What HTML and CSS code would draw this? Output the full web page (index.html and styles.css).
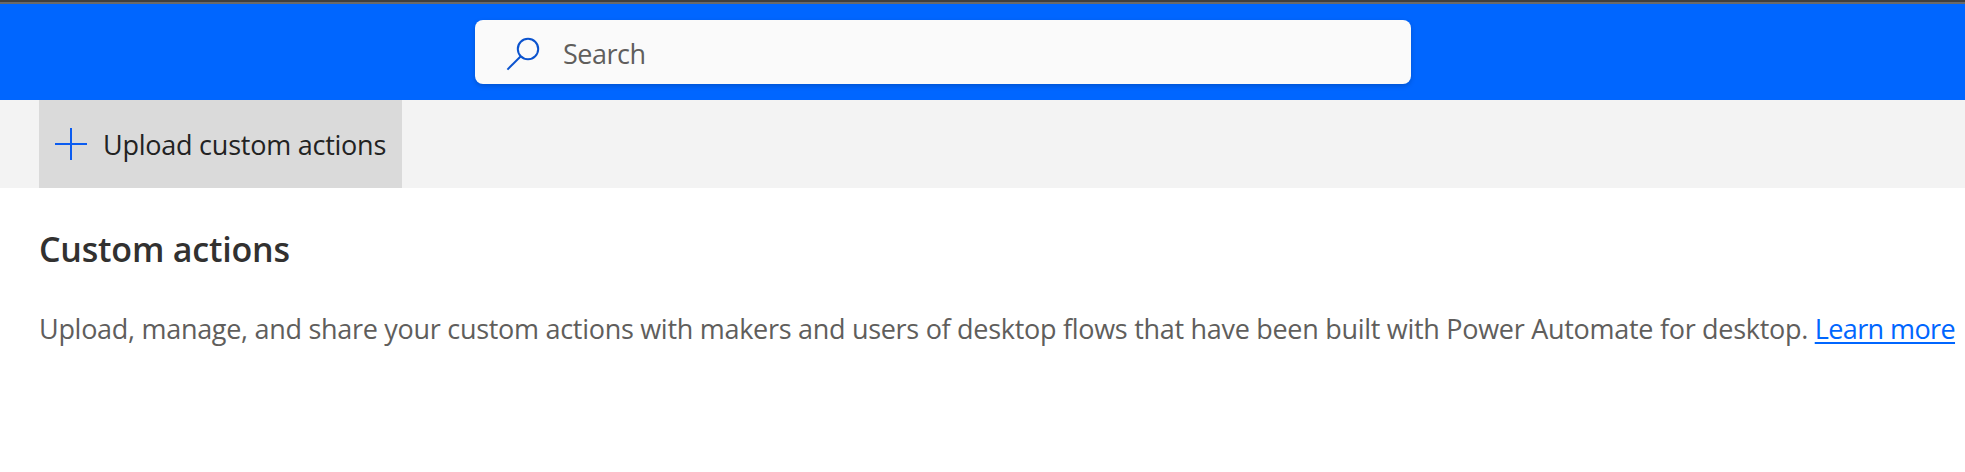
FILE: index.html
```html
<!DOCTYPE html>
<html lang="en">
<head>
<meta charset="utf-8">
<title>Custom actions</title>
<link rel="stylesheet" href="styles.css">
</head>
<body>
<div class="window-edge"></div>
<header class="topbar">
  <div class="search">
    <svg class="search-icon" width="34" height="34" viewBox="0 0 34 34"><circle cx="22" cy="12" r="10.2"/><path d="M14.8 19.2L1.4 32.6"/></svg>
    <span class="search-label">Search</span>
  </div>
</header>
<nav class="commands">
  <button class="upload">
    <svg class="plus" width="32" height="32" viewBox="0 0 32 32"><path d="M16 0V32M0 16H32"/></svg>
    <span class="upload-label">Upload custom actions</span>
  </button>
</nav>
<main class="content">
  <h1 class="title">Custom actions</h1>
  <p class="intro">Upload, manage, and share your custom actions with makers and users of desktop flows that have been built with Power Automate for desktop. <a class="link" href="#">Learn more</a></p>
</main>
</body>
</html>
```
FILE: styles.css
```css
* { box-sizing: border-box; }
body { margin: 0; background: #fff; font-family: "Segoe UI", "Open Sans", "Noto Sans", sans-serif; overflow: hidden; }
.window-edge { height: 4px; background: #3f3f3f; border-bottom: 2px solid #696969; }
.topbar { height: 96px; background: #0066ff; padding: 16px 0 0 475px; }
.search { width: 936px; height: 64px; background: #fafafa; border-radius: 8px; display: flex; align-items: center; padding: 3px 0 0 31px; gap: 23px; box-shadow: 0 2px 5px rgba(0, 0, 0, .18); }
.search-icon { fill: none; stroke: #0b53ce; stroke-width: 2; }
.search-label { font-size: 27px; letter-spacing: -.5px; color: #605e5c; }
.commands { height: 88px; background: #f3f3f3; padding-left: 39px; }
.upload { width: 363px; height: 88px; border: 0; background: #dadada; display: flex; align-items: center; padding: 0 0 0 16px; gap: 16px; font: inherit; font-size: 27px; letter-spacing: -.24px; color: #222; white-space: nowrap; }
.upload-label { padding-top: 1px; }
.plus { fill: none; stroke: #0b5cf0; stroke-width: 2; flex: none; }
.content { padding: 37px 0 0 39px; white-space: nowrap; }
.title { margin: 0; font-size: 34px; line-height: 48px; letter-spacing: -.2px; font-weight: 600; color: #323130; }
.intro { margin: 36px 0 0; font-size: 27px; line-height: 40px; letter-spacing: -.29px; color: #605e5c; }
.link { letter-spacing: -.6px; color: #0066ff; text-decoration-thickness: 2px; text-underline-offset: 3px; text-decoration-skip-ink: none; }
```
